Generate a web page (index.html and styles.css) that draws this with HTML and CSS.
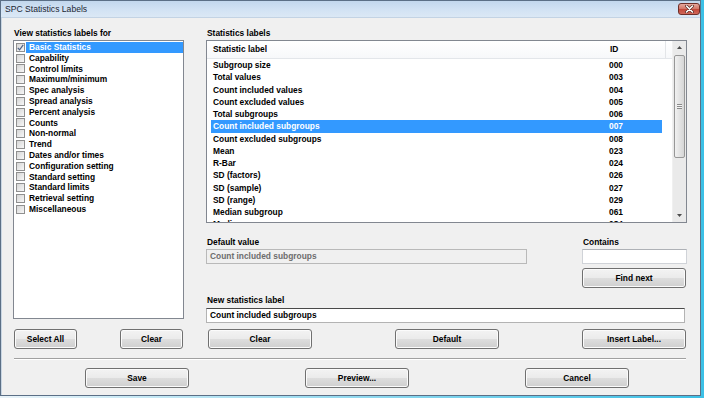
FILE: index.html
```html
<!DOCTYPE html>
<html lang="en">
<head>
    <meta charset="UTF-8">
    <title>SPC Statistics Labels</title>
    <link rel="stylesheet" href="styles.css">
</head>
<body>
    <div class="window">
        <div class="titlebar">
            <span class="title">SPC Statistics Labels</span>
            <button class="close-btn">
                <svg width="9" height="8" viewBox="0 0 9 8">
                    <path d="M1.5 1 L7.5 7 M7.5 1 L1.5 7" stroke="#5a2a24" stroke-width="3" stroke-linecap="round"/>
                    <path d="M1.5 1 L7.5 7 M7.5 1 L1.5 7" stroke="#fff" stroke-width="1.6" stroke-linecap="round"/>
                </svg>
            </button>
        </div>
        <div class="dialog">
            <div class="main">
                <div class="left-col">
                    <div class="label">View statistics labels for</div>
                    <div class="checklist">
                        <div class="check-item selected">
                            <span class="checkbox">
                                <svg width="7" height="7" viewBox="0 0 7 7"><path d="M0.8 3.8 L2.6 5.8 L6.2 0.8" fill="none" stroke="#4d6185" stroke-width="1.2"/></svg>
                            </span>
                            <span class="item-text">Basic Statistics</span>
                        </div>
                        <div class="check-item"><span class="checkbox"></span><span class="item-text">Capability</span></div>
                        <div class="check-item"><span class="checkbox"></span><span class="item-text">Control limits</span></div>
                        <div class="check-item"><span class="checkbox"></span><span class="item-text">Maximum/minimum</span></div>
                        <div class="check-item"><span class="checkbox"></span><span class="item-text">Spec analysis</span></div>
                        <div class="check-item"><span class="checkbox"></span><span class="item-text">Spread analysis</span></div>
                        <div class="check-item"><span class="checkbox"></span><span class="item-text">Percent analysis</span></div>
                        <div class="check-item"><span class="checkbox"></span><span class="item-text">Counts</span></div>
                        <div class="check-item"><span class="checkbox"></span><span class="item-text">Non-normal</span></div>
                        <div class="check-item"><span class="checkbox"></span><span class="item-text">Trend</span></div>
                        <div class="check-item"><span class="checkbox"></span><span class="item-text">Dates and/or times</span></div>
                        <div class="check-item"><span class="checkbox"></span><span class="item-text">Configuration setting</span></div>
                        <div class="check-item"><span class="checkbox"></span><span class="item-text">Standard setting</span></div>
                        <div class="check-item"><span class="checkbox"></span><span class="item-text">Standard limits</span></div>
                        <div class="check-item"><span class="checkbox"></span><span class="item-text">Retrieval setting</span></div>
                        <div class="check-item"><span class="checkbox"></span><span class="item-text">Miscellaneous</span></div>
                    </div>
                </div>

                <div class="right-col">
                    <div class="label">Statistics labels</div>
                    <div class="listview">
                        <div class="lv-table">
                            <div class="lv-header">
                                <span class="col-label">Statistic label</span>
                                <span class="col-id">ID</span>
                            </div>
                            <div class="lv-rows">
                                <div class="lv-row"><span class="col-label">Subgroup size</span><span class="col-id">000</span></div>
                                <div class="lv-row"><span class="col-label">Total values</span><span class="col-id">003</span></div>
                                <div class="lv-row"><span class="col-label">Count included values</span><span class="col-id">004</span></div>
                                <div class="lv-row"><span class="col-label">Count excluded values</span><span class="col-id">005</span></div>
                                <div class="lv-row"><span class="col-label">Total subgroups</span><span class="col-id">006</span></div>
                                <div class="lv-row selected"><span class="col-label">Count included subgroups</span><span class="col-id">007</span></div>
                                <div class="lv-row"><span class="col-label">Count excluded subgroups</span><span class="col-id">008</span></div>
                                <div class="lv-row"><span class="col-label">Mean</span><span class="col-id">023</span></div>
                                <div class="lv-row"><span class="col-label">R-Bar</span><span class="col-id">024</span></div>
                                <div class="lv-row"><span class="col-label">SD (factors)</span><span class="col-id">026</span></div>
                                <div class="lv-row"><span class="col-label">SD (sample)</span><span class="col-id">027</span></div>
                                <div class="lv-row"><span class="col-label">SD (range)</span><span class="col-id">029</span></div>
                                <div class="lv-row"><span class="col-label">Median subgroup</span><span class="col-id">061</span></div>
                                <div class="lv-row"><span class="col-label">Median</span><span class="col-id">084</span></div>
                            </div>
                        </div>
                        <div class="scrollbar">
                            <div class="sb-arrow">
                                <svg width="5" height="3" viewBox="0 0 5 3"><path d="M0 3 L2.5 0 L5 3 Z" fill="#4d4d4d"/></svg>
                            </div>
                            <div class="sb-track">
                                <div class="sb-thumb">
                                    <span class="grip"></span>
                                </div>
                            </div>
                            <div class="sb-arrow">
                                <svg width="5" height="3" viewBox="0 0 5 3"><path d="M0 0 L5 0 L2.5 3 Z" fill="#4d4d4d"/></svg>
                            </div>
                        </div>
                    </div>

                    <div class="fields">
                        <div class="default-field">
                            <div class="label">Default value</div>
                            <div class="textbox disabled">Count included subgroups</div>
                        </div>
                        <div class="contains-field">
                            <div class="label">Contains</div>
                            <div class="textbox"></div>
                            <button class="btn find-btn">Find next</button>
                        </div>
                    </div>

                    <div class="label new-label">New statistics label</div>
                    <div class="textbox focused">Count included subgroups</div>
                </div>

                <div class="btn-row left-btns">
                    <button class="btn small-btn">Select All</button>
                    <button class="btn small-btn">Clear</button>
                </div>
                <div class="btn-row right-btns">
                    <button class="btn">Clear</button>
                    <button class="btn">Default</button>
                    <button class="btn">Insert Label...</button>
                </div>
            </div>

            <div class="separator"></div>

            <div class="footer-btns">
                <button class="btn">Save</button>
                <button class="btn">Preview...</button>
                <button class="btn">Cancel</button>
            </div>
        </div>
    </div>
</body>
</html>
```

FILE: styles.css
```css
html,
body {
    margin: 0;
}
body {
    width: 704px;
    height: 398px;
    overflow: hidden;
    background: linear-gradient(90deg, #e9f3f9, #3cc0e6); /* desktop behind the window edge */
    font-family: "Liberation Sans", Arial, sans-serif;
    font-size: 8.4px;
    font-weight: bold;
    color: #000;
}
.window {
    width: 701px;
    height: 396px;
    box-sizing: border-box;
    border: 1px solid #5b6f86;
    background: #f0f0f0;
    display: flex;
    flex-direction: column;
}
.titlebar {
    height: 17px;
    flex: none;
    display: flex;
    align-items: center;
    padding: 0 0 0 4px;
    background: linear-gradient(#c2d7ed, #d3e3f4 60%, #dbe8f5);
    border-bottom: 1px solid #c3d3e4;
    box-sizing: border-box;
}
.title {
    font-weight: normal;
    font-size: 8.6px;
    color: #1b2633;
}
.close-btn {
    margin-left: auto;
    width: 22px;
    height: 12px;
    padding: 0;
    border: 1px solid #6e2f29;
    border-radius: 3px;
    background: linear-gradient(#e6a89d, #d47a6c 45%, #c4493b 55%, #d0685a);
    display: flex;
    align-items: center;
    justify-content: center;
}
.close-btn svg {
    display: block;
}
.dialog {
    flex: 1;
    display: flex;
    flex-direction: column;
    border-left: 1px solid #c9d6e3;
}
.main {
    display: grid;
    grid-template-columns: 171px 481px;
    grid-template-rows: auto 20px;
    column-gap: 22px;
    row-gap: 6px;
    padding: 10px 0 0 11px;
}
.label {
    height: 10px;
    line-height: 10px;
    margin-bottom: 2px;
    padding-left: 1px;
    white-space: nowrap;
}

/* left check list */
.left-col {
    display: flex;
    flex-direction: column;
}
.checklist {
    height: 279px;
    box-sizing: border-box;
    border: 1px solid #828790;
    background: #fff;
    padding: 1px 0 0 2px;
}
.check-item {
    display: flex;
    align-items: center;
    height: 10.8px;
}
.checkbox {
    width: 9px;
    height: 9px;
    box-sizing: border-box;
    border: 1px solid #8f8f8f;
    background: linear-gradient(135deg, #d6d6d6, #f7f7f7);
    display: flex;
    align-items: center;
    justify-content: center;
    flex: none;
}
.checkbox svg {
    display: block;
}
.item-text {
    flex: 1;
    margin-left: 1px;
    padding-left: 3px;
    height: 10.8px;
    line-height: 10.8px;
    white-space: nowrap;
}
.check-item.selected .item-text {
    background: #3399ff;
    color: #fff;
}

/* right list view */
.right-col {
    display: flex;
    flex-direction: column;
}
.listview {
    height: 183px;
    box-sizing: border-box;
    border: 1px solid #828790;
    background: #fff;
    display: flex;
}
.lv-table {
    flex: 1;
    overflow: hidden;
}
.lv-header {
    height: 17px;
    line-height: 17px;
    display: flex;
    background: linear-gradient(#ffffff, #f7f8fa);
    border-bottom: 1px solid #e3e6ea;
}
.lv-header .col-label {
    width: 397px;
    padding-left: 6px;
}
.lv-header .col-id {
    width: 55px;
    border-right: 1px solid #e3e5e8;
}
.lv-row {
    display: flex;
    margin-left: 4px;
    width: 451px;
    height: 12.27px;
    line-height: 12.27px;
    white-space: nowrap;
}
.lv-row .col-label {
    width: 395px;
    padding-left: 2px;
}
.lv-row .col-id {
    padding-left: 1px;
}
.lv-row.selected {
    background: #3399ff;
    color: #fff;
}
.scrollbar {
    width: 13px;
    flex: none;
    display: flex;
    flex-direction: column;
    background: #eaeaea;
    border-left: 1px solid #f0f0f0;
}
.sb-arrow {
    height: 13px;
    display: flex;
    align-items: center;
    justify-content: center;
}
.sb-track {
    flex: 1;
}
.sb-thumb {
    height: 103px;
    margin: 1px 1px 0 1px;
    box-sizing: border-box;
    border: 1px solid #979797;
    border-radius: 2px;
    background: linear-gradient(90deg, #f1f1f1, #e3e3e3 50%, #d6d6d6);
    display: flex;
    align-items: center;
    justify-content: center;
}
.grip {
    width: 5px;
    height: 5px;
    background: repeating-linear-gradient(#8a8a8a 0 1px, #f4f4f4 1px 2px);
}

/* fields under the list */
.fields {
    display: flex;
    justify-content: space-between;
    margin-top: 14px;
}
.default-field {
    width: 321px;
}
.contains-field {
    width: 105px;
    display: flex;
    flex-direction: column;
}
.textbox {
    height: 15px;
    line-height: 13px;
    box-sizing: border-box;
    border: 1px solid #d0d3d8;
    border-top-color: #aeb1b6;
    background: #fff;
    padding-left: 3px;
    white-space: nowrap;
}
.textbox.disabled {
    background: #f0f0f0;
    border-color: #b9b9b9;
    color: #6d6d6d;
}
.textbox.focused {
    width: 479px;
    margin-top: 1px;
    border-color: #b3b3b3;
    border-top-color: #4a4a4a;
}
.find-btn {
    margin-top: 4px;
}
.new-label {
    margin-top: 7px;
}

/* buttons */
.btn {
    width: 104px;
    height: 20px;
    box-sizing: border-box;
    padding: 0;
    border: 1px solid #707070;
    border-radius: 3px;
    background: linear-gradient(#f3f3f3, #ebebeb 48%, #dddddd 52%, #cfcfcf);
    box-shadow: inset 0 0 0 1px #fbfbfb;
    font: inherit;
    color: #000;
}
.btn-row {
    display: flex;
    justify-content: space-between;
    align-items: flex-start;
}
.left-btns {
    padding: 0 1px;
}
.small-btn {
    width: 63px;
}
.right-btns {
    padding: 0 1px 0 2px;
}
.separator {
    margin: 9px 14px 0 12px;
    border-top: 1px solid #a0a0a0;
    border-bottom: 1px solid #ffffff;
}
.footer-btns {
    display: flex;
    gap: 116px;
    margin-top: 8px;
    padding-left: 83px;
}
```
